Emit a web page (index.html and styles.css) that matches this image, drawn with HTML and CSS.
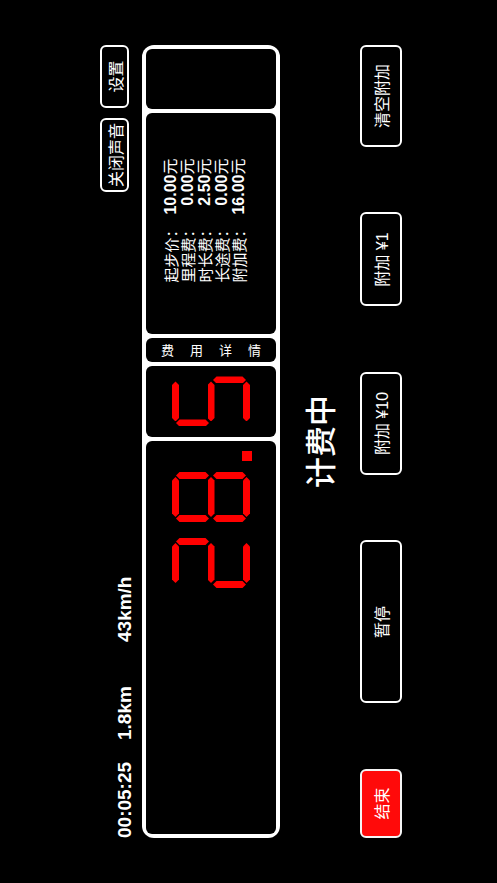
FILE: index.html
```html
<!DOCTYPE html>
<html lang="zh-CN">
<head>
<meta charset="utf-8">
<title>计价器</title>
<link rel="stylesheet" href="styles.css">
</head>
<body>
<div class="screen">
<div class="stage">
  <div class="top-row">
    <div class="stats">
      <span class="stat">00:05:25</span>
      <span class="stat">1.8km</span>
      <span class="stat">43km/h</span>
    </div>
    <div class="top-actions">
      <button class="btn btn-small btn-sound">关闭声音</button>
      <button class="btn btn-small btn-settings">设置</button>
    </div>
  </div>

  <div class="panel">
    <div class="cell cell-main">
      <div class="lcd" role="img" aria-label="28.">
        <div class="digit">
          <span class="seg a on"></span><span class="seg b on"></span><span class="seg c"></span>
          <span class="seg d on"></span><span class="seg e on"></span><span class="seg f"></span>
          <span class="seg g on"></span>
        </div>
        <div class="digit">
          <span class="seg a on"></span><span class="seg b on"></span><span class="seg c on"></span>
          <span class="seg d on"></span><span class="seg e on"></span><span class="seg f on"></span>
          <span class="seg g on"></span>
        </div>
        <span class="dot"></span>
      </div>
    </div>
    <div class="cell cell-decimal">
      <div class="digit" role="img" aria-label="5">
        <span class="seg a on"></span><span class="seg b"></span><span class="seg c on"></span>
        <span class="seg d on"></span><span class="seg e"></span><span class="seg f on"></span>
        <span class="seg g on"></span>
      </div>
    </div>
    <div class="cell cell-label"><span class="label-text">费用详情</span></div>
    <div class="cell cell-detail">
      <div class="fees">
        <span class="fee-name">起步价：</span><span class="fee-val"><span class="num">10.00</span>元</span>
        <span class="fee-name">里程费：</span><span class="fee-val"><span class="num">0.00</span>元</span>
        <span class="fee-name">时长费：</span><span class="fee-val"><span class="num">2.50</span>元</span>
        <span class="fee-name">长途费：</span><span class="fee-val"><span class="num">0.00</span>元</span>
        <span class="fee-name">附加费：</span><span class="fee-val"><span class="num">16.00</span>元</span>
      </div>
    </div>
    <div class="cell cell-blank"></div>
  </div>

  <div class="status">计费中</div>

  <div class="bottom-row">
    <button class="btn btn-big btn-end">结束</button>
    <button class="btn btn-big btn-pause">暂停</button>
    <button class="btn btn-big btn-add10">附加 ¥10</button>
    <button class="btn btn-big btn-add1">附加 ¥1</button>
    <button class="btn btn-big btn-clear">清空附加</button>
  </div>
</div>
</div>
</body>
</html>
```

FILE: styles.css
```css
html, body {
  margin: 0;
  padding: 0;
  width: 497px;
  height: 883px;
  overflow: hidden;
  background: #000;
}

body {
  font-family: "Liberation Sans", "Noto Sans CJK SC", sans-serif;
  color: #fff;
}

.screen {
  width: 497px;
  height: 883px;
  overflow: hidden;
}

/* landscape stage, turned to fit the portrait window */
.stage {
  width: 883px;
  height: 497px;
  box-sizing: border-box;
  padding: 100px 45px 0;
  display: flex;
  flex-direction: column;
  transform-origin: 0 0;
  transform: translateY(883px) rotate(-90deg);
  background: #000;
}

/* ---------- top row ---------- */
.top-row {
  height: 36px;
  display: flex;
  justify-content: space-between;
  align-items: flex-start;
}

.stats {
  display: flex;
  margin-top: 14px;
}

.stat {
  width: 98px;
  font-size: 19px;
  line-height: 22px;
  font-weight: bold;
  white-space: nowrap;
}

.top-actions {
  display: flex;
  gap: 10px;
}

.btn {
  box-sizing: border-box;
  background: transparent;
  border: 2px solid #fff;
  border-radius: 6px;
  color: #fff;
  font-family: "Liberation Sans", "Noto Sans CJK SC", sans-serif;
  font-size: 16px;
  padding: 0;
  display: flex;
  align-items: center;
  justify-content: center;
  white-space: nowrap;
}

.btn-small {
  height: 29px;
}

.btn-sound { width: 74px; }
.btn-settings { width: 63px; }

/* ---------- meter panel ---------- */
.panel {
  margin-top: 6px;
  height: 138px;
  box-sizing: border-box;
  background: #fff;
  border-radius: 12px;
  padding: 4px;
  display: flex;
  gap: 4px;
}

.cell {
  background: #000;
  border-radius: 6px;
}

.cell-main {
  flex: 1;
  display: flex;
  justify-content: flex-end;
  align-items: center;
  padding-right: 10px;
}

.lcd {
  display: flex;
  align-items: flex-end;
  gap: 16px;
}

.dot {
  width: 10px;
  height: 10px;
  background: #ff0000;
  margin-left: -5px;
  margin-bottom: -2px;
}

.cell-decimal {
  width: 71px;
  display: flex;
  justify-content: center;
  align-items: center;
}

.cell-label {
  width: 24px;
  display: flex;
  justify-content: center;
  align-items: center;
}

.label-text {
  writing-mode: vertical-rl;
  text-orientation: sideways;
  font-family: "Noto Sans CJK SC", sans-serif;
  font-size: 13px;
  line-height: 16px;
  letter-spacing: 16px;
  margin-bottom: -16px;
}

.cell-detail {
  width: 221px;
  display: flex;
  justify-content: center;
  align-items: flex-start;
  box-sizing: border-box;
  padding-top: 16px;
  padding-left: 6px;
}

.fees {
  display: grid;
  grid-template-columns: auto auto;
  column-gap: 8px;
  font-size: 15px;
  line-height: 17px;
}

.fee-name {
  font-family: "Noto Sans CJK SC", sans-serif;
}

.fee-val {
  text-align: right;
  font-size: 16px;
  font-family: "Liberation Sans", "Noto Sans CJK SC", sans-serif;
}

.num {
  font-weight: bold;
}

.cell-blank {
  width: 60px;
}

/* ---------- seven-segment digits ---------- */
.digit {
  position: relative;
  width: 50px;
  height: 78px;
}

.seg {
  position: absolute;
  background: transparent;
}

.seg.on {
  background: #ff0000;
}

.seg.a, .seg.g, .seg.d {
  left: 5px;
  width: 40px;
  height: 7px;
  clip-path: polygon(3.5px 0, calc(100% - 3.5px) 0, 100% 50%, calc(100% - 3.5px) 100%, 3.5px 100%, 0 50%);
}

.seg.a { top: 0; }
.seg.g { top: 35.5px; }
.seg.d { top: 71px; }

.seg.b, .seg.c, .seg.e, .seg.f {
  width: 7px;
  height: 33px;
  clip-path: polygon(50% 0, 100% 3.5px, 100% calc(100% - 3.5px), 50% 100%, 0 calc(100% - 3.5px), 0 3.5px);
}

.seg.f { left: 0; top: 4px; }
.seg.b { left: 43px; top: 4px; }
.seg.e { left: 0; top: 41px; }
.seg.c { left: 43px; top: 41px; }

/* ---------- status ---------- */
.status {
  margin-top: 24px;
  text-align: center;
  font-family: "Noto Sans CJK SC", sans-serif;
  font-size: 31px;
  line-height: 30px;
  font-weight: 500;
}

/* ---------- bottom row ---------- */
.bottom-row {
  margin-top: 26px;
  display: flex;
  justify-content: space-between;
}

.btn-big {
  height: 42px;
}

.btn-end {
  width: 69px;
  background: #ff0a0a;
  border-color: #f4f4f4;
}

.btn-pause { width: 163px; }
.btn-add10 { width: 103px; }
.btn-add1 { width: 94px; }
.btn-clear { width: 102px; }
```
